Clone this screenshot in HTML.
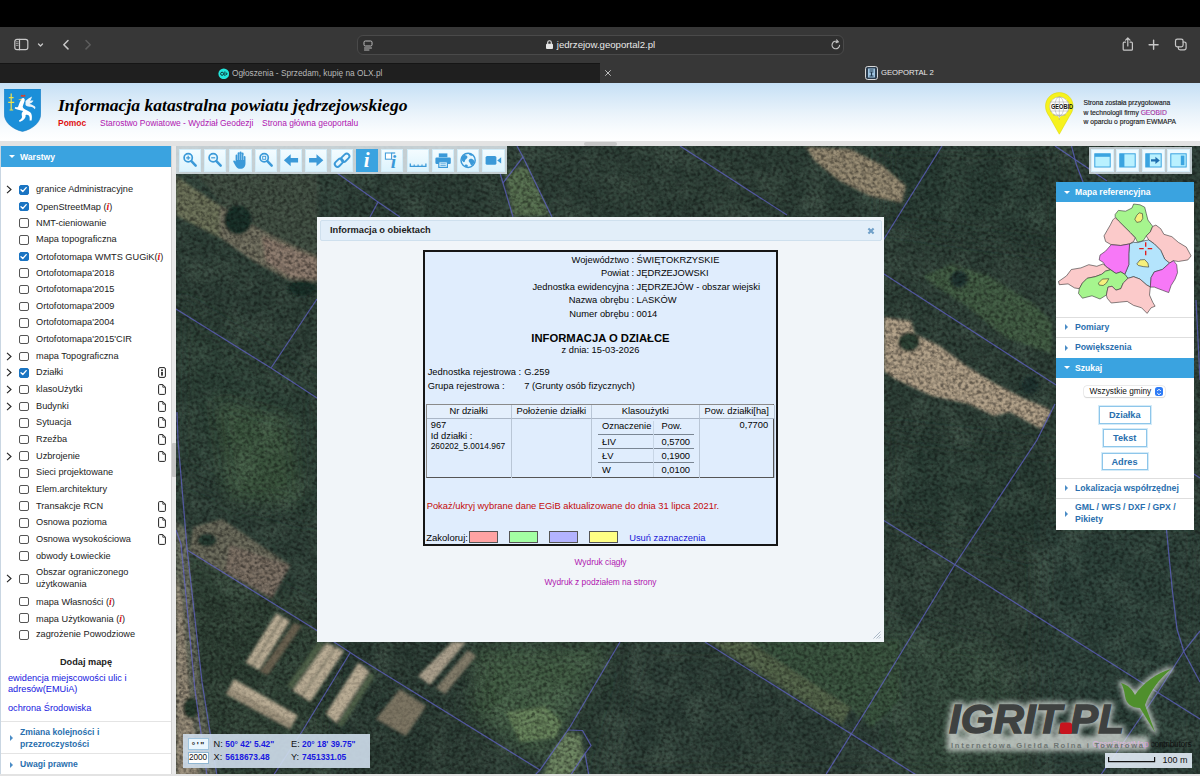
<!DOCTYPE html>
<html lang="pl">
<head>
<meta charset="utf-8">
<title>GEOPORTAL 2</title>
<style>
*{box-sizing:border-box;margin:0;padding:0}
html,body{width:1200px;height:776px;overflow:hidden;background:#000;font-family:"Liberation Sans",sans-serif;}
.abs{position:absolute}
#chrome{position:absolute;left:0;top:0;width:1200px;height:83px;background:#000}
#tb{position:absolute;left:0;top:27px;width:1200px;height:36px;background:#373737}
#tabs{position:absolute;left:0;top:63px;width:1200px;height:20px;background:#373737}
#tabinact{position:absolute;left:0;top:0;width:600px;height:20px;background:#1f1f1f;border-top:1px solid #151515}
#url{position:absolute;left:357px;top:8px;width:487px;height:19.5px;border-radius:6px;background:#303030;border:1px solid #4a4a4a}
#urltxt{position:absolute;left:0;width:100%;top:3px;text-align:center;color:#e8e8e8;font-size:9.650px;letter-spacing:0}
.tabtxt{position:absolute;top:5px;color:#b8b8b8;font-size:8.5px;white-space:nowrap}
#page{position:absolute;left:0;top:83px;width:1200px;height:693px;background:#e3e3e3;overflow:hidden}
#hdr{position:absolute;left:0;top:0;width:1200px;height:58px;background:linear-gradient(#c5e0f5 0%,#d9eaf8 28%,#ebf4fb 55%,#f9fcfe 82%,#fff 100%)}
.gt{position:absolute;margin-top:.8px;left:1083.500px;font-size:6.720px;color:#222;white-space:nowrap;-webkit-text-stroke:.15px #222}
#title{position:absolute;left:58px;top:12px;font-family:"Liberation Serif",serif;font-weight:bold;font-style:italic;font-size:17.6px;color:#000;white-space:nowrap}
.hl{position:absolute;top:34.7px;font-size:8.45px;white-space:nowrap}
#left{position:absolute;left:0;top:63px;width:170.500px;height:628.200px;background:#fff;overflow:hidden;border-left:1px solid #c9d6e2}
.acc{position:absolute;left:0;width:170px;height:21px;background:#3aa3e0;color:#fff;font-weight:bold;font-size:8.6px}
.acct{position:absolute;left:19px;top:5.5px;white-space:nowrap}
.tri{position:absolute;width:0;height:0}
.tri.d{left:8px;top:9px;border-left:3px solid transparent;border-right:3px solid transparent;border-top:3.5px solid #fff}
.tri.r{left:9px;border-top:2.7px solid transparent;border-bottom:2.7px solid transparent;border-left:3px solid #4a8cc6}
.row{position:absolute;left:0;margin-top:.6px;width:170px;height:16px;font-size:9.2px;color:#222}
.arw{position:absolute;left:5.200px;top:3.5px}
.cb{position:absolute;left:18px;top:3.3px;width:9.5px;height:9.5px;border:1px solid #555;border-radius:2px;background:#fff}
.cb.on{background:#1a74c2;border-color:#1a74c2}
.cb svg{position:absolute;left:-.8px;top:-.8px}
.lt{position:absolute;left:35px;top:2.5px;white-space:nowrap;line-height:11px}
.lt.two{top:-3.5px;line-height:11.6px}
.ri{color:#e01010;font-family:"Liberation Serif",serif;font-weight:bold;font-style:italic;font-size:10px}
.doc{position:absolute;left:157px;top:2.5px}
.addm{position:absolute;left:0;width:170px;text-align:center;font-weight:bold;font-size:9.2px;color:#222}
.blk{position:absolute;left:7px;font-size:9.2px;line-height:11px;color:#1515e0;white-space:nowrap}
.acc2{position:absolute;left:0;width:170px;background:#fff;border-top:1px solid #e4e4e4;color:#2a6fae;font-weight:bold;font-size:8.6px}
.acc2 .tri.r{top:50%;margin-top:-3px;border-top-width:3px;border-bottom-width:3px;border-left-width:3.500px}
.acct2{position:absolute;left:19px;line-height:11.5px;white-space:nowrap}
#hthumb{position:absolute;left:584px;top:59px;width:33px;height:3.500px;background:#c6c6c6;border-radius:2px}
#vscroll{position:absolute;left:170.500px;top:63px;width:5.500px;height:628.200px;background:#e9e9e9;border-left:1px solid #d2d2d2}
#vthumb{position:absolute;left:0;top:297px;width:5px;height:34px;background:#c3c3c3;border-radius:1px}
#map{position:absolute;left:176px;top:63px;width:1024px;height:628.200px;background:#2d4138;overflow:hidden}
#mapsvg{position:absolute;left:0;top:0}
#mtb{position:absolute;left:0;top:0;width:331.300px;height:28px;background:rgba(222,232,238,.86)}
.tbtn{position:absolute;top:2.900px;width:22.200px;height:22.700px;background:linear-gradient(#f4fcff,#dcf3fd);border:1px solid #d2ecf8}
.tbtn svg{position:absolute;left:-1px;top:-1px}
.tbtn.act{background:#3aa3e0;border-color:#3aa3e0}
#rtb{position:absolute;left:912.500px;top:.5px;width:103.300px;height:27.700px;background:rgba(218,228,234,.84)}
.rbtn{position:absolute;top:2.700px;width:23px;height:22.500px;background:#eefaff;border:1px solid #d6edf8}
.rbtn svg{position:absolute;left:-1px;top:-1px}
#dlg{position:absolute;left:141px;top:70.500px;width:567px;height:425px;background:#f1f5f9;font-size:9.200px;color:#111}
#dlgt{position:absolute;left:2.500px;top:3px;width:562px;height:21px;background:#e2eef9;border:1px solid #cfe0ee;border-radius:2px}
#dlgtt{position:absolute;left:9.500px;top:4.500px;font-weight:bold;font-size:9.250px;color:#222;white-space:nowrap}
#ibox{position:absolute;left:106.200px;top:33.500px;width:354.500px;height:296px;background:#e0edfd;border:2px solid #161616;font-size:9.350px;color:#050505}
.kv{position:absolute;left:0;width:100%;height:12px;white-space:nowrap}
.k{position:absolute;right:141.500px;top:0}
.v{position:absolute;left:211.300px;top:0}
#ihead{position:absolute;left:0;width:100%;top:79.500px;text-align:center;font-weight:bold;font-size:11.250px;white-space:nowrap}
#idate{position:absolute;left:0;width:100%;top:92.500px;text-align:center;white-space:nowrap}
.jr{position:absolute;left:2.500px;white-space:nowrap;width:300px}
#tbl{position:absolute;left:0.500px;top:152px;width:348.500px;height:74px;border:1px solid #555;border-top-color:#8a8a8a;border-left-color:#8a8a8a}
.th{position:absolute;top:0;height:13.500px;text-align:center;border-right:1px solid #b9c6d6;border-bottom:1px solid #aab6c6;line-height:13px;white-space:nowrap;background:#e4effc}
.td{position:absolute;top:13.500px;height:59px;border-right:1px solid #b9c6d6}
.it{position:absolute;left:6px;width:96.500px;height:14px;white-space:nowrap}
.it.ln{border-top:1px solid #7a8694}
.c1{position:absolute;left:4px;top:2px}
.c2{position:absolute;left:63.500px;top:2px}
#redt{position:absolute;left:1.500px;top:248.500px;color:#c40a0a;white-space:nowrap}
#zak{position:absolute;left:1px;top:280px;font-size:9.500px;white-space:nowrap}
.sw{position:absolute;top:279px;width:29px;height:12px;border:1px solid #555}
#usun{position:absolute;left:204px;top:280.500px;color:#1a1ad8;white-space:nowrap}
.wyd{position:absolute;left:0;width:100%;text-align:center;color:#b016b0;font-size:8.400px;white-space:nowrap}
#rp{position:absolute;left:879.500px;top:36px;width:138.500px;height:348px;background:#fff}
.rh{position:absolute;left:0;width:138.500px;height:20.200px;background:#3aa3e0;color:#fff;font-weight:bold;font-size:8.600px}
.rht{position:absolute;left:19.500px;top:5px;white-space:nowrap}
.rr{position:absolute;left:0;width:138.500px;border-top:1px solid #dedede;color:#2a6fae;font-weight:bold;font-size:8.700px}
.rr .tri.r{top:50%;margin-top:-3.200px;left:9.500px;border-top-width:3px;border-bottom-width:3px;border-left-width:3.500px}
.rrt{position:absolute;left:19.500px;top:4px;white-space:nowrap}
#sel{position:absolute;left:28.500px;top:204px;width:80.500px;height:11px;border-radius:3px;background:#fff;box-shadow:0 0 0 .5px #dcdcdc,0 .5px 1px rgba(0,0,0,.18);font-size:8.300px;line-height:11px;padding-left:5.500px;color:#111;white-space:nowrap}
#selb{position:absolute;right:1.200px;top:1px;width:8px;height:9px;border-radius:2.500px;background:#2f7cf6}
#selb svg{position:absolute;left:1px;top:.5px}
.sb{position:absolute;border:1px solid #8ec6ea;box-shadow:0 0 0 1px #d4ebf8;background:#fff;color:#2a6fae;font-weight:bold;font-size:9.200px;text-align:center;line-height:16px}
#cbox{position:absolute;left:7px;top:587.500px;width:186.500px;height:34.500px;background:rgba(207,222,236,.9);font-size:9.200px}
.cbtn{position:absolute;left:4.500px;width:21px;height:12px;border:1px solid #9fc4de;background:#eaf6fd;text-align:center;line-height:10.500px;font-size:9px;color:#111}
.cl{position:absolute;color:#111;white-space:nowrap}
.cv{position:absolute;color:#1818e0;font-weight:bold;font-size:8.400px;white-space:nowrap;margin-top:.3px}
#attr{position:absolute;right:8.500px;top:592.500px;font-size:8.300px;color:#111;white-space:nowrap;letter-spacing:-.2px}
#scl{position:absolute;left:929px;top:606.500px;width:87px;height:15px;background:rgba(222,232,242,.92);font-size:9px;color:#111}

</style>
</head>
<body>
<div id="chrome">
  <div id="tb">
    <svg class="abs" style="left:12px;top:9px" width="90" height="18" viewBox="0 0 90 18" fill="none" stroke="#c8c8c8" stroke-width="1.2" stroke-linecap="round" stroke-linejoin="round">
      <rect x="2.800" y="3.300" width="13" height="10.400" rx="2.200"/><path d="M7.500 3.300v10.400"/><path d="M4.300 5.800h1.800M4.300 7.600h1.800M4.300 9.400h1.800" stroke-width=".7"/>
      <path d="M26.5 8l2 2 2-2" stroke-width="1.3"/>
      <path d="M56 4.5l-4.2 4.2 4.2 4.2" stroke-width="1.5"/>
      <path d="M74 4.5l4.2 4.2-4.2 4.2" stroke="#5c5c5c" stroke-width="1.5"/>
    </svg>
    <div id="url">
      <svg class="abs" style="left:5px;top:4px" width="10" height="11" viewBox="0 0 10 11" fill="none" stroke="#bdbdbd" stroke-width="1"><rect x="1" y="1" width="8" height="5" rx="1.3"/><path d="M1.5 8h7M1.5 10h4.5" stroke-linecap="round"/></svg>
      <div id="urltxt"><svg width="7" height="9" viewBox="0 0 7 9" style="vertical-align:-0.5px;margin-right:4px"><rect x="0" y="3.8" width="7" height="5.2" rx="1" fill="#e6e6e6"/><path d="M1.7 4V2.6a1.8 1.8 0 0 1 3.6 0V4" fill="none" stroke="#e6e6e6" stroke-width="1.1"/></svg>jedrzejow.geoportal2.pl</div>
      <svg class="abs" style="left:472px;top:3px" width="12" height="12" viewBox="0 0 12 12" fill="none" stroke="#c4c4c4" stroke-width="1.1" stroke-linecap="round"><path d="M9.6 6.2a3.8 3.8 0 1 1-1.6-3.3"/><path d="M6.6 0.8l1.7 2-2.3 1" stroke-linejoin="round"/></svg>
    </div>
    <svg class="abs" style="left:1118px;top:8px" width="76" height="20" viewBox="0 0 76 20" fill="none" stroke="#c8c8c8" stroke-width="1.2" stroke-linecap="round" stroke-linejoin="round">
      <path d="M7.5 7.2H6.2a1 1 0 0 0-1 1v6a1 1 0 0 0 1 1h7.2a1 1 0 0 0 1-1v-6a1 1 0 0 0-1-1h-1.3"/><path d="M9.8 11V3.2M7.6 5.2l2.2-2.2 2.2 2.2"/>
      <path d="M35.6 5.2v9M31.1 9.7h9" stroke-width="1.4"/>
      <rect x="57.5" y="4.2" width="7.6" height="7.6" rx="1.8"/><path d="M60.3 11.8v1.2a1.8 1.8 0 0 0 1.8 1.8h4.2a1.8 1.8 0 0 0 1.8-1.8V8.8a1.8 1.8 0 0 0-1.8-1.8h-1.2"/>
    </svg>
  </div>
  <div id="tabs">
    <div id="tabinact"></div>
    <svg class="abs" style="left:217.500px;top:4.500px" width="11.500" height="11.500" viewBox="0 0 12 12"><circle cx="6" cy="6" r="5.6" fill="#23e5db"/><circle cx="4.3" cy="6" r="1.6" fill="none" stroke="#0b2f33" stroke-width="1"/><path d="M7.2 3.6v4.8M8.3 5l1.4 1-1.4 1" stroke="#0b2f33" stroke-width="1" fill="none"/></svg>
    <div class="tabtxt" style="left:232px;font-size:8.3px">Ogłoszenia - Sprzedam, kupię na OLX.pl</div>
    <svg class="abs" style="left:604px;top:6px" width="8" height="8" viewBox="0 0 8 8" stroke="#bdbdbd" stroke-width="1" stroke-linecap="round"><path d="M1.5 1.5l5 5M6.5 1.5l-5 5"/></svg>
    <svg class="abs" style="left:865px;top:3px" width="13" height="14" viewBox="0 0 13 14"><rect x=".5" y=".5" width="12" height="13" rx="2.2" fill="#2c3e50" stroke="#d8d8d8" stroke-width="1"/><rect x="3" y="2.5" width="7" height="9" fill="#9fc4e0"/><path d="M4.5 4h4M4.5 6h4M6.5 6v4M4.5 10h4" stroke="#20384d" stroke-width="1.2"/></svg>
    <div class="tabtxt" style="left:881px;color:#e9e9e9;font-size:7.7px;letter-spacing:-.05px">GEOPORTAL 2</div>
  </div>
</div>
<div id="page">
  <div id="hdr">
    <svg class="abs" style="left:4px;top:6px" width="37" height="43" viewBox="4 89 37 43">
      <path d="M4.200 89h36.600v24.500c0 9-8 15.500-18.300 18-10.300-2.500-18.300-9-18.300-18z" fill="#1b8fd9" stroke="#1a79bd" stroke-width=".5"/>
      <path d="M11.200 93.400v16.600M8.800 97.600h4.800M8.200 102.300h6M9.600 110h3.600" stroke="#f2e24a" stroke-width="1.200" fill="none"/>
      <path d="M21.500 98.500c1.500-1 3-.5 3.200 1 .300 2-1.500 4.500-2 7 .0 1.500 1.500 2.500 3.500 3.500 2 1 3.800 1.500 5 3.500 1 2 .8 5 .4 7h-2c.2-2 .2-4-.8-5-1-.8-2.300-.8-3.300-.3.500 1.500-.5 3-2 4.500-1 1-2.500 1.800-3.800 2.200l-.8-1.300c1.300-.700 2.500-1.800 3-3 .4-1.200-.4-2.300-.2-3.800.2-1.200 1-2 1.500-2.700-2-.5-4-.8-6-1.500l-2.500-1 .5-1.700c1.500.6 2.500.5 3-.5.800-1.800 1.200-4 2.500-6 .5-.8.300-1.500 1-2z" fill="#fff"/>
      <path d="M25.500 101c2-1.500 4-3.500 6.500-4.500-.5 2-1 3-2 4.500 1.500-.5 2.500-.5 3.500-.3-1 1.500-2.500 2.500-4 3.200 2 .3 4 1.300 5.500 2.600.6 1 .5 2-.3 2.700-1-1.800-2.700-2.700-4.700-2.500-2 .1-3.500-.5-4.500-1.700z" fill="#eaf4fb"/>
      <path d="M20.500 96.200c.5-1.500 2-1.800 2.800-.8.800-1 2.200-.6 2.200.8-1.500.8-3.500.8-5 0z" fill="#d8412a"/>
      <path d="M18.200 99.500l3-.8.2 1.800z" fill="#f2c84a"/>
    </svg>
    <svg class="abs" style="left:1044px;top:8px" width="32" height="45" viewBox="1044 91 32 45">
      <path d="M1059.300 92.600c7.700 0 13.800 6 13.800 13.600 0 4-1.600 7-3.800 10.200l-10 17.800-10-17.800c-2.200-3.200-3.800-6.200-3.800-10.200 0-7.600 6.100-13.600 13.800-13.600z" fill="#f6f21e" stroke="#d8d400" stroke-width=".5"/>
      <circle cx="1059.300" cy="106.500" r="9.800" fill="#fff"/>
      <path d="M1059.300 118.500l-5-9h10z" fill="#fff"/>
      <g fill="none" stroke="#8a8a8a" stroke-width=".4"><circle cx="1059.300" cy="106.500" r="9.600"/><ellipse cx="1059.300" cy="106.500" rx="4.500" ry="9.600"/><path d="M1059.300 96.900v23M1050 102h18.600M1050 111h18.600M1053 115h12.500"/></g>
      <text x="1051" y="109.300" font-family="Liberation Sans,sans-serif" font-weight="bold" font-size="6.300" fill="#111" textLength="22" lengthAdjust="spacingAndGlyphs">GEOBID</text>
    </svg>
    <div class="gt" style="top:15px">Strona została przygotowana</div>
    <div class="gt" style="top:24.800px">w technologii firmy <span style="color:#e040e0">GEOBID</span></div>
    <div class="gt" style="top:34.500px">w oparciu o program EWMAPA</div>
    <div id="title">Informacja katastralna powiatu jędrzejowskiego</div>
    <div class="hl" style="left:58px;color:#e01010;font-weight:bold">Pomoc</div>
    <div class="hl" style="left:100px;color:#b016b0">Starostwo Powiatowe - Wydział Geodezji</div>
    <div class="hl" style="left:262px;color:#b016b0">Strona główna geoportalu</div>
  </div>
  <div id="hthumb"></div>
  <div id="left">
    <div class="acc" style="top:0"><span class="tri d"></span><span class="acct">Warstwy</span></div>
    <div class="row" style="top:35.2px"><svg class="arw" width="6" height="9" viewBox="0 0 6 9"><path d="M1 .8l4 3.7-4 3.7" fill="none" stroke="#222" stroke-width="1.1"/></svg><span class="cb on"><svg width="9" height="9" viewBox="0 0 9 9"><path d="M2 4.7l1.8 1.8L7.2 2.6" fill="none" stroke="#fff" stroke-width="1.3" stroke-linecap="round" stroke-linejoin="round"/></svg></span><span class="lt">granice Administracyjne</span></div>
    <div class="row" style="top:51.9px"><span class="cb on"><svg width="9" height="9" viewBox="0 0 9 9"><path d="M2 4.7l1.8 1.8L7.2 2.6" fill="none" stroke="#fff" stroke-width="1.3" stroke-linecap="round" stroke-linejoin="round"/></svg></span><span class="lt">OpenStreetMap (<i class="ri">i</i>)</span></div>
    <div class="row" style="top:68.5px"><span class="cb"></span><span class="lt">NMT-cieniowanie</span></div>
    <div class="row" style="top:85.2px"><span class="cb"></span><span class="lt">Mapa topograficzna</span></div>
    <div class="row" style="top:101.8px"><span class="cb on"><svg width="9" height="9" viewBox="0 0 9 9"><path d="M2 4.7l1.8 1.8L7.2 2.6" fill="none" stroke="#fff" stroke-width="1.3" stroke-linecap="round" stroke-linejoin="round"/></svg></span><span class="lt">Ortofotomapa WMTS GUGiK(<i class="ri">i</i>)</span></div>
    <div class="row" style="top:118.5px"><span class="cb"></span><span class="lt">Ortofotomapa'2018</span></div>
    <div class="row" style="top:135.1px"><span class="cb"></span><span class="lt">Ortofotomapa'2015</span></div>
    <div class="row" style="top:151.8px"><span class="cb"></span><span class="lt">Ortofotomapa'2009</span></div>
    <div class="row" style="top:168.4px"><span class="cb"></span><span class="lt">Ortofotomapa'2004</span></div>
    <div class="row" style="top:185.1px"><span class="cb"></span><span class="lt">Ortofotomapa'2015'CIR</span></div>
    <div class="row" style="top:201.7px"><svg class="arw" width="6" height="9" viewBox="0 0 6 9"><path d="M1 .8l4 3.7-4 3.7" fill="none" stroke="#222" stroke-width="1.1"/></svg><span class="cb"></span><span class="lt">mapa Topograficzna</span></div>
    <div class="row" style="top:218.4px"><svg class="arw" width="6" height="9" viewBox="0 0 6 9"><path d="M1 .8l4 3.7-4 3.7" fill="none" stroke="#222" stroke-width="1.1"/></svg><span class="cb on"><svg width="9" height="9" viewBox="0 0 9 9"><path d="M2 4.7l1.8 1.8L7.2 2.6" fill="none" stroke="#fff" stroke-width="1.3" stroke-linecap="round" stroke-linejoin="round"/></svg></span><span class="lt">Działki</span><svg class="doc" width="8" height="11" viewBox="0 0 8 11"><rect x=".6" y=".6" width="6.8" height="9.8" rx="1.4" fill="#fff" stroke="#222" stroke-width="1"/><circle cx="4" cy="3.2" r=".9" fill="#111"/><rect x="3.2" y="4.8" width="1.6" height="3.8" fill="#111"/></svg></div>
    <div class="row" style="top:235.0px"><svg class="arw" width="6" height="9" viewBox="0 0 6 9"><path d="M1 .8l4 3.7-4 3.7" fill="none" stroke="#222" stroke-width="1.1"/></svg><span class="cb"></span><span class="lt">klasoUżytki</span><svg class="doc" width="8" height="11" viewBox="0 0 8 11"><path d="M1.6.6h3.2L7.4 3.2v6.2a1 1 0 0 1-1 1H1.6a1 1 0 0 1-1-1V1.6a1 1 0 0 1 1-1z" fill="#fff" stroke="#222" stroke-width="1"/><path d="M4.8.6v2.6h2.6" fill="none" stroke="#222" stroke-width=".8"/></svg></div>
    <div class="row" style="top:251.7px"><svg class="arw" width="6" height="9" viewBox="0 0 6 9"><path d="M1 .8l4 3.7-4 3.7" fill="none" stroke="#222" stroke-width="1.1"/></svg><span class="cb"></span><span class="lt">Budynki</span><svg class="doc" width="8" height="11" viewBox="0 0 8 11"><path d="M1.6.6h3.2L7.4 3.2v6.2a1 1 0 0 1-1 1H1.6a1 1 0 0 1-1-1V1.6a1 1 0 0 1 1-1z" fill="#fff" stroke="#222" stroke-width="1"/><path d="M4.8.6v2.6h2.6" fill="none" stroke="#222" stroke-width=".8"/></svg></div>
    <div class="row" style="top:268.3px"><span class="cb"></span><span class="lt">Sytuacja</span><svg class="doc" width="8" height="11" viewBox="0 0 8 11"><path d="M1.6.6h3.2L7.4 3.2v6.2a1 1 0 0 1-1 1H1.6a1 1 0 0 1-1-1V1.6a1 1 0 0 1 1-1z" fill="#fff" stroke="#222" stroke-width="1"/><path d="M4.8.6v2.6h2.6" fill="none" stroke="#222" stroke-width=".8"/></svg></div>
    <div class="row" style="top:285.0px"><span class="cb"></span><span class="lt">Rzeźba</span><svg class="doc" width="8" height="11" viewBox="0 0 8 11"><path d="M1.6.6h3.2L7.4 3.2v6.2a1 1 0 0 1-1 1H1.6a1 1 0 0 1-1-1V1.6a1 1 0 0 1 1-1z" fill="#fff" stroke="#222" stroke-width="1"/><path d="M4.8.6v2.6h2.6" fill="none" stroke="#222" stroke-width=".8"/></svg></div>
    <div class="row" style="top:301.6px"><svg class="arw" width="6" height="9" viewBox="0 0 6 9"><path d="M1 .8l4 3.7-4 3.7" fill="none" stroke="#222" stroke-width="1.1"/></svg><span class="cb"></span><span class="lt">Uzbrojenie</span><svg class="doc" width="8" height="11" viewBox="0 0 8 11"><path d="M1.6.6h3.2L7.4 3.2v6.2a1 1 0 0 1-1 1H1.6a1 1 0 0 1-1-1V1.6a1 1 0 0 1 1-1z" fill="#fff" stroke="#222" stroke-width="1"/><path d="M4.8.6v2.6h2.6" fill="none" stroke="#222" stroke-width=".8"/></svg></div>
    <div class="row" style="top:318.3px"><span class="cb"></span><span class="lt">Sieci projektowane</span></div>
    <div class="row" style="top:334.9px"><span class="cb"></span><span class="lt">Elem.architektury</span></div>
    <div class="row" style="top:351.6px"><span class="cb"></span><span class="lt">Transakcje RCN</span><svg class="doc" width="8" height="11" viewBox="0 0 8 11"><path d="M1.6.6h3.2L7.4 3.2v6.2a1 1 0 0 1-1 1H1.6a1 1 0 0 1-1-1V1.6a1 1 0 0 1 1-1z" fill="#fff" stroke="#222" stroke-width="1"/><path d="M4.8.6v2.6h2.6" fill="none" stroke="#222" stroke-width=".8"/></svg></div>
    <div class="row" style="top:368.2px"><span class="cb"></span><span class="lt">Osnowa pozioma</span><svg class="doc" width="8" height="11" viewBox="0 0 8 11"><path d="M1.6.6h3.2L7.4 3.2v6.2a1 1 0 0 1-1 1H1.6a1 1 0 0 1-1-1V1.6a1 1 0 0 1 1-1z" fill="#fff" stroke="#222" stroke-width="1"/><path d="M4.8.6v2.6h2.6" fill="none" stroke="#222" stroke-width=".8"/></svg></div>
    <div class="row" style="top:384.9px"><span class="cb"></span><span class="lt">Osnowa wysokościowa</span><svg class="doc" width="8" height="11" viewBox="0 0 8 11"><path d="M1.6.6h3.2L7.4 3.2v6.2a1 1 0 0 1-1 1H1.6a1 1 0 0 1-1-1V1.6a1 1 0 0 1 1-1z" fill="#fff" stroke="#222" stroke-width="1"/><path d="M4.8.6v2.6h2.6" fill="none" stroke="#222" stroke-width=".8"/></svg></div>
    <div class="row" style="top:401.5px"><span class="cb"></span><span class="lt">obwody Łowieckie</span></div>
    <div class="row" style="top:424.2px"><svg class="arw" width="6" height="9" viewBox="0 0 6 9"><path d="M1 .8l4 3.7-4 3.7" fill="none" stroke="#222" stroke-width="1.1"/></svg><span class="cb"></span><span class="lt two">Obszar ograniczonego<br>użytkowania</span></div>
    <div class="row" style="top:447.0px"><span class="cb"></span><span class="lt">mapa Własności (<i class="ri">i</i>)</span></div>
    <div class="row" style="top:463.6px"><span class="cb"></span><span class="lt">mapa Użytkowania (<i class="ri">i</i>)</span></div>
    <div class="row" style="top:480.3px"><span class="cb"></span><span class="lt">zagrożenie Powodziowe</span></div>
    <div class="addm" style="top:511px">Dodaj mapę</div>
    <div class="blk" style="top:527px">ewidencja miejscowości ulic i<br>adresów(EMUiA)</div>
    <div class="blk" style="top:557px">ochrona Środowiska</div>
    <div class="acc2" style="top:575px;height:33px"><span class="tri r"></span><span class="acct2" style="top:5px">Zmiana kolejności i<br>przezroczystości</span></div>
    <div class="acc2" style="top:607px;height:23px"><span class="tri r"></span><span class="acct2" style="top:5px">Uwagi prawne</span></div>
  </div>
  <div id="vscroll"><div id="vthumb"></div></div>
  <div id="map">
<svg id="mapsvg" width="1024" height="630" viewBox="176 146 1024 630">
<defs>
<filter id="b6" x="-20%" y="-20%" width="140%" height="140%"><feGaussianBlur stdDeviation="9"/></filter>
<filter id="b3" x="-20%" y="-20%" width="140%" height="140%"><feGaussianBlur stdDeviation="1.500"/></filter>
<filter id="noise" x="0" y="0" width="100%" height="100%"><feTurbulence type="fractalNoise" baseFrequency="0.3 0.34" numOctaves="2" seed="7"/><feColorMatrix type="matrix" values="0 0 0 0 0  0 0 0 0 0  0 0 0 0 0  1.7 1.7 1.7 0 -2.2"/><feGaussianBlur stdDeviation="0.75"/></filter>
<filter id="noise2" x="0" y="0" width="100%" height="100%"><feTurbulence type="fractalNoise" baseFrequency="0.31 0.27" numOctaves="2" seed="23"/><feColorMatrix type="matrix" values="0 0 0 0 1  0 0 0 0 1  0 0 0 0 1  1 1 1 0 -1.3"/><feGaussianBlur stdDeviation="0.9"/></filter>
<filter id="noise3" x="0" y="0" width="100%" height="100%"><feTurbulence type="fractalNoise" baseFrequency="0.035" numOctaves="2" seed="5"/><feColorMatrix type="matrix" values="0 0 0 0 0.55  0 0 0 0 0.78  0 0 0 0 0.55  1.2 1.2 1.2 0 -1.6"/></filter>
</defs>
<rect x="176" y="146" width="1024" height="630" fill="#2b3e35"/>
<g filter="url(#b6)">
  <polygon points="176,300 317,390 317,520 250,500 176,470" fill="#2b3f35"/>
  <polygon points="215,400 290,420 300,500 230,500" fill="#38523b"/>
  <polygon points="884,146 1060,146 1060,250 884,225" fill="#273a32"/>
  <polygon points="884,430 1060,450 1060,560 884,520" fill="#273a32"/>
  <polygon points="475,646 612,646 566,726 540,760 470,715" fill="#405b43"/>
  <polygon points="870,620 1000,650 1030,776 870,776" fill="#32493a"/>
  <polygon points="640,642 870,642 900,776 600,776" fill="#293c34"/>
  <polygon points="1040,520 1200,520 1200,776 1040,776" fill="#2c3f38"/>
  <polygon points="176,540 330,620 330,776 176,776" fill="#2f4336"/>
</g>
<rect x="176" y="146" width="1024" height="630" filter="url(#noise3)" opacity=".12"/>
<g filter="url(#b3)">
  <polygon points="196,174 318,174 318,256 292,245 257,228 226,209" fill="#404f42"/>
  <polygon points="176,176 201,193 226,209 257,228 292,245 318,256 318,282 288,280 253,261 215,234 176,215.5" fill="#72705e"/>
  <polygon points="176,176 201,193 220,206 220,238 176,215.5" fill="#6c7258"/>
  <polygon points="262,236 318,259 318,280 290,277 266,262" fill="#8c7a6c"/>
  <ellipse cx="238" cy="220" rx="14" ry="15" fill="#172f28"/>
  <ellipse cx="302" cy="288" rx="14" ry="8" fill="#172f28"/>
  <polygon points="193,527 222,519 290,565 272,599 212,566 189,551" fill="#6b6a5a"/>
  <polygon points="230,545 290,566 272,598 225,572" fill="#7c6f64"/>
  <ellipse cx="207" cy="540" rx="10" ry="7" fill="#23392f"/>
  <polygon points="176,520 186,530 200,680 216,776 198,776 186,690 176,600" fill="#6b7060"/>
  <polygon points="176,575 182,600 189,690 199,776 176,776" fill="#a29681"/>
  <ellipse cx="191" cy="708" rx="8" ry="11" fill="#273e2d"/>
  <polygon points="506,712 545,706 562,722 556,738 520,742" fill="#66835a"/>
  <polygon points="567,732 581,735 584,756 572,776 543,776 554,748" fill="#6c8560"/>
  <polygon points="748,640 900,640 900,700 872,728 850,708" fill="#39523e"/>
  <polygon points="708,641 748,641 851,708 842,725" fill="#52654a"/>
  <polygon points="505,172 527,166 550,216 513,216" fill="#56704f"/>
  <polygon points="806,147 850,149 882,165 906,186 902,203 870,196 838,180 814,160" fill="#978b72"/>
  <polygon points="923,276 952,264 990,276 1035,305 1052,321 1052,354 1006,338 965,305 932,284" fill="#405b43"/>
  <polygon points="884,317 911,321 915,334 940,346 965,365 994,383 1023,398 1047,408 1051,412 1041,429 1010,412 994,416 969,404 932,396 895,379 884,371" fill="#b2a188"/>
  <ellipse cx="909" cy="342" rx="11" ry="10" fill="#2a4032"/>
  <ellipse cx="959" cy="279" rx="9" ry="9" fill="#1b332d"/>
  <ellipse cx="1030" cy="385" rx="9" ry="9" fill="#1b332d"/>
</g>
<rect x="-200" y="-300" width="1700" height="1500" transform="rotate(21 688 461)" filter="url(#noise)" opacity=".46"/>
<rect x="-200" y="-300" width="1700" height="1500" transform="rotate(-33 688 461)" filter="url(#noise2)" opacity=".10"/>
<g filter="url(#b3)" opacity=".93">
  <polygon points="245.600,662.500 259.100,670.200 290,621 276.500,613.200" fill="#c4b59c"/>
  <path d="M252 666.500L283 617" stroke="#434a3d" stroke-width="1.200"/>
  <polygon points="260,672 267.800,675 301.600,625.700 293.900,622.900" fill="#706552"/>
  <polygon points="287.100,685.700 292,689.500 324.800,644.100 318,642.200" fill="#52654c"/>
  <polygon points="292.900,690.500 310.300,702 344.100,650.900 326.700,643.100" fill="#c4b59c"/>
  <path d="M301.500 696.500L335.500 647" stroke="#434a3d" stroke-width="1.200"/>
  <polygon points="325.800,713.700 336.400,723.300 369.200,671.200 358.600,662.500" fill="#c4b59c"/>
  <polygon points="337.500,724 342,727 375,676 370,672" fill="#52654c"/>
  <polygon points="418,676 452,642 466,642 430,685" fill="#b4a793"/>
  <polygon points="436,688 468,650 476,656 445,694" fill="#89816e"/>
  <polygon points="400,689 426,706 406,736 376,719" fill="#827966"/>
  <polygon points="234,678.900 226.200,694.300 290,729.100 297.700,715.600" fill="#c4b59c"/>
  <polygon points="230,687 226.200,694.300 290,729.100 293.500,722" fill="#a49781"/>
</g>
<rect x="176" y="600" width="320" height="176" filter="url(#noise)" opacity=".14"/>
<g fill="none" stroke="#6a69e0" stroke-width="1.250" opacity=".62">
  <path d="M176 309L271 368L317 398L500 512"/>
  <path d="M271 368L317 299"/>
  <path d="M177 412L178 440L187 548L202 682L217 776"/>
  <path d="M176 530L181 544L195 690L207 776"/>
  <path d="M187 550L313 628L357 657L540 770"/>
  <path d="M350 653L303 730L273 776"/>
  <path d="M620 642L570 727L540 770L534 776"/>
  <path d="M567.500 730L582.500 730.500L591 745.500L585 753.500L589 776M585 753.500L570 776"/>
  <path d="M705 642L918 776"/>
  <path d="M1055 404L1037 440L954 566L870 704L825 776"/>
  <path d="M780 456L883 520L957 566L1133 677L1200 719"/>
  <path d="M1166.500 530L1172.300 590L1177 629L1184 652L1200 682"/>
  <path d="M1200 631L1184 651L1158 692L1112 759L1100 776"/>
  <path d="M942 146L884 239L860 280"/>
  <path d="M860 259L884 274L1053 383L1200 478"/>
  <path d="M680 146L787 215"/>
  <path d="M517 146L523 157L552 217"/>
  <path d="M523 157L503 183"/>
  <path d="M500 173L513 217"/>
  <path d="M337 173L378 202L400 217"/>
  <path d="M378 202L370 217"/>
  <path d="M1055 146L1087 167.500L1107 181"/>
  <path d="M1071.500 146L1076.500 165L1083 182"/>
  <path d="M1196 300L1200 380"/>
</g>
</svg>
<div id="mtb"><div class="tbtn" style="left:2.8px"><svg width="22.2" height="22.7" viewBox="0 0 22.2 22.7"><circle cx="9.2" cy="8.8" r="4.1" fill="#e6f7fe" stroke="#3b99d8" stroke-width="1.7"/><path d="M12.4 12.1l4.300 4.500" stroke="#3b99d8" stroke-width="2.500" stroke-linecap="round"/><path d="M7.200 8.800h4M9.200 6.800v4" stroke="#3b99d8" stroke-width="1.200"/></svg></div><div class="tbtn" style="left:28.1px"><svg width="22.2" height="22.7" viewBox="0 0 22.2 22.7"><circle cx="9.2" cy="8.8" r="4.1" fill="#e6f7fe" stroke="#3b99d8" stroke-width="1.7"/><path d="M12.4 12.1l4.300 4.500" stroke="#3b99d8" stroke-width="2.500" stroke-linecap="round"/><path d="M7.200 8.800h4" stroke="#3b99d8" stroke-width="1.200"/></svg></div><div class="tbtn" style="left:53.4px"><svg width="22.2" height="22.7" viewBox="0 0 22.2 22.7"><path d="M6.600 12.400V6.600a1 1 0 0 1 2 0V4.200a1 1 0 0 1 2 0V3.600a1 1 0 0 1 2 0v.800a1 1 0 0 1 2 0V7.800a1 1 0 0 1 1.900 0v6.400c0 3.200-1.700 5.600-5.100 5.600-2.500 0-3.800-1.100-4.900-3.100L4.300 12.800c-.5-1.100 1-2 2.300-.4z" fill="#3b99d8"/><path d="M8.600 5.500v5.500M10.600 4.500v6.500M12.600 4.700v6.300M14.600 6v5" stroke="#e6f7fe" stroke-width=".45"/></svg></div><div class="tbtn" style="left:78.7px"><svg width="22.2" height="22.7" viewBox="0 0 22.2 22.7"><circle cx="9.2" cy="8.8" r="4.1" fill="#e6f7fe" stroke="#3b99d8" stroke-width="1.7"/><path d="M12.4 12.1l4.300 4.500" stroke="#3b99d8" stroke-width="2.500" stroke-linecap="round"/><rect x="7.700" y="7.300" width="3" height="3" fill="none" stroke="#3b99d8" stroke-width=".9"/></svg></div><div class="tbtn" style="left:104.0px"><svg width="22.2" height="22.7" viewBox="0 0 22.2 22.7"><path d="M3.900 11.300l6.800-6v3.800h7.400v4.400h-7.400v3.800z" fill="#3b99d8"/></svg></div><div class="tbtn" style="left:129.3px"><svg width="22.2" height="22.7" viewBox="0 0 22.2 22.7"><path d="M18.300 11.300l-6.800-6v3.800H4.100v4.400h7.400v3.800z" fill="#3b99d8"/></svg></div><div class="tbtn" style="left:154.6px"><svg width="22.2" height="22.7" viewBox="0 0 22.2 22.7"><g fill="none" stroke="#3b99d8" stroke-width="1.900" stroke-linecap="round"><rect x="3.200" y="11" width="9.400" height="5.400" rx="2.700" transform="rotate(-45 7.900 13.700)"/><rect x="9.600" y="6" width="9.400" height="5.400" rx="2.700" transform="rotate(-45 14.300 8.700)"/></g></svg></div><div class="tbtn act" style="left:179.9px"><svg width="22.2" height="22.7" viewBox="0 0 22.2 22.7"><text x="10.600" y="18.400" text-anchor="middle" font-family="Liberation Serif,serif" font-style="italic" font-weight="bold" font-size="21" fill="#fff">i</text></svg></div><div class="tbtn" style="left:205.2px"><svg width="22.2" height="22.7" viewBox="0 0 22.2 22.7"><text x="12.400" y="18.600" text-anchor="middle" font-family="Liberation Serif,serif" font-style="italic" font-weight="bold" font-size="19.500" fill="#3b99d8">i</text><rect x="4.400" y="4" width="6.200" height="6.200" fill="#fff" stroke="#3b99d8" stroke-width="1"/><path d="M10.600 4h3.600" stroke="#3b99d8" stroke-width="1.200"/></svg></div><div class="tbtn" style="left:230.5px"><svg width="22.2" height="22.7" viewBox="0 0 22.2 22.7"><path d="M3.300 14.600v2.800h15.600v-2.800" fill="none" stroke="#3b99d8" stroke-width="1.300"/><path d="M7.200 15.600v1.800M11.100 15.600v1.800M15 15.600v1.800" stroke="#3b99d8" stroke-width="1.100"/></svg></div><div class="tbtn" style="left:255.8px"><svg width="22.2" height="22.7" viewBox="0 0 22.2 22.7"><rect x="6.800" y="4.400" width="8.600" height="3.800" fill="#3b99d8"/><rect x="3.400" y="8.600" width="15.400" height="6.400" rx="1.200" fill="#3b99d8"/><rect x="6.800" y="12.800" width="8.600" height="5.600" fill="#e6f7fe" stroke="#3b99d8" stroke-width="1.200"/><path d="M8.400 14.800h5.400M8.400 16.600h5.400" stroke="#3b99d8" stroke-width=".8"/></svg></div><div class="tbtn" style="left:281.1px"><svg width="22.2" height="22.7" viewBox="0 0 22.2 22.7"><circle cx="11.100" cy="11.300" r="7.100" fill="#e6f7fe" stroke="#3b99d8" stroke-width="1.500"/><path d="M6.800 6.200c1.800-.4 3.200.4 3.600 1.600.4 1.300-.9 2-1.800 2.700-.9.700-.3 2.200-1.200 2.600-.9.400-2.400-1-2.900-2.600-.4-1.600.5-3.400 2.300-4.300zM13 10c1.300-.4 3.200.2 4 1.500.7 1.300-.2 3.700-1.600 4.600-1.400.9-1.700-.8-2.300-1.900-.6-1.100-1.600-1.500-1.400-2.600.1-.8.5-1.300 1.300-1.600zM12.100 4.600c1.400.1 2.800.8 3.600 1.800-.9.500-2.100.4-2.900-.1-.6-.4-.9-1-.7-1.700zM8.500 15.500c.8-.3 1.800 0 2.200.8.300.7 0 1.600-.5 2-.9-.2-1.800-.7-2.400-1.400-.1-.6.200-1.100.7-1.400z" fill="#3b99d8"/></svg></div><div class="tbtn" style="left:306.4px"><svg width="22.2" height="22.7" viewBox="0 0 22.2 22.7"><rect x="3.600" y="7" width="10.800" height="8.800" rx="1.600" fill="#3b99d8"/><path d="M15.200 11.400l4-3.200v6.400z" fill="#3b99d8"/></svg></div></div>
<div id="rtb"><div class="rbtn" style="left:2.3px"><svg width="23" height="22.5" viewBox="0 0 23 22.5"><rect x="3.800" y="4.800" width="15.400" height="13.200" fill="#b9f1ff" stroke="#3ba4e0" stroke-width="1"/><rect x="3.800" y="4.800" width="15.400" height="3" fill="#3ba4e0"/></svg></div><div class="rbtn" style="left:27.8px"><svg width="23" height="22.5" viewBox="0 0 23 22.5"><rect x="3.800" y="4.800" width="15.400" height="13.200" fill="#b9f1ff" stroke="#3ba4e0" stroke-width="1"/><rect x="3.800" y="4.800" width="4.600" height="13.200" fill="#3ba4e0"/></svg></div><div class="rbtn" style="left:53.2px"><svg width="23" height="22.5" viewBox="0 0 23 22.5"><rect x="3.800" y="4.800" width="15.400" height="13.200" fill="#b9f1ff" stroke="#3ba4e0" stroke-width="1"/><rect x="3.800" y="4.800" width="4" height="13.200" fill="#3ba4e0"/><path d="M9 10.200h4.400V7.800l4.400 3.600-4.400 3.600v-2.400H9z" fill="#1f6fb0"/></svg></div><div class="rbtn" style="left:78.5px"><svg width="23" height="22.5" viewBox="0 0 23 22.5"><rect x="3.800" y="4.800" width="15.400" height="13.200" fill="#b9f1ff" stroke="#3ba4e0" stroke-width="1"/><rect x="13.800" y="6.600" width="3.600" height="9.600" fill="#3ba4e0"/></svg></div></div>
<div id="dlg">
  <div id="dlgt"><span id="dlgtt">Informacja o obiektach</span><svg class="abs" style="left:546px;top:6px" width="8" height="8" viewBox="0 0 8 8"><path d="M1.400 1.400l5.200 5.200M6.600 1.400l-5.200 5.200" stroke="#6f9fc8" stroke-width="2.100" stroke-linecap="butt"/></svg></div>
  <div id="ibox">
    <div class="kv" style="top:2.700px"><span class="k">Województwo :</span><span class="v">ŚWIĘTOKRZYSKIE</span></div>
    <div class="kv" style="top:16.200px"><span class="k">Powiat :</span><span class="v">JĘDRZEJOWSKI</span></div>
    <div class="kv" style="top:29.700px"><span class="k">Jednostka ewidencyjna :</span><span class="v">JĘDRZEJÓW - obszar wiejski</span></div>
    <div class="kv" style="top:43.200px"><span class="k">Nazwa obrębu :</span><span class="v">LASKÓW</span></div>
    <div class="kv" style="top:56.700px"><span class="k">Numer obrębu :</span><span class="v">0014</span></div>
    <div id="ihead">INFORMACJA O DZIAŁCE</div>
    <div id="idate">z dnia: 15-03-2026</div>
    <div class="jr" style="top:115px">Jednostka rejestrowa : <span class="abs" style="left:96.500px;top:0">G.259</span></div>
    <div class="jr" style="top:128.600px">Grupa rejestrowa : <span class="abs" style="left:96.500px;top:0">7 (Grunty osób fizycznych)</span></div>
    <div id="tbl">
      <div class="th" style="left:0;width:85px">Nr działki</div>
      <div class="th" style="left:85px;width:80.300px">Położenie działki</div>
      <div class="th" style="left:165.300px;width:107.700px">Klasoużytki</div>
      <div class="th" style="left:273px;width:75px">Pow. działki[ha]</div>
      <div class="td" style="left:0;width:85px"><span class="abs" style="left:4px;top:1.500px;line-height:10.700px;white-space:nowrap">967<br>Id działki :<br><span style="font-size:8.400px">260202_5.0014.967</span></span></div>
      <div class="td" style="left:85px;width:80.300px"></div>
      <div class="td" style="left:165.300px;width:107.700px">
        <div class="it" style="top:0.500px"><span class="c1">Oznaczenie</span><span class="c2">Pow.</span></div>
        <div class="it ln" style="top:15.500px"><span class="c1">ŁIV</span><span class="c2">0,5700</span></div>
        <div class="it ln" style="top:29.500px"><span class="c1">ŁV</span><span class="c2">0,1900</span></div>
        <div class="it ln" style="top:43.500px"><span class="c1">W</span><span class="c2">0,0100</span></div>
        <div class="abs" style="left:61.500px;top:2px;width:1px;height:56px;background:#c8d6e6"></div>
      </div>
      <div class="td" style="left:273px;width:75px"><span class="abs" style="right:5.500px;top:1.500px">0,7700</span></div>
    </div>
    <div id="redt">Pokaż/ukryj wybrane dane EGiB aktualizowane do dnia 31 lipca 2021r.</div>
    <div id="zak">Zakoloruj:</div>
    <div class="sw" style="left:44px;background:#ffa3a3"></div>
    <div class="sw" style="left:84px;background:#a3ffa3"></div>
    <div class="sw" style="left:123.700px;background:#b3b3ff"></div>
    <div class="sw" style="left:163.800px;background:#ffff84"></div>
    <div id="usun">Usuń zaznaczenia</div>
  </div>
  <div class="wyd" style="top:340.500px">Wydruk ciągły</div>
  <div class="wyd" style="top:360.300px">Wydruk z podziałem na strony</div>
  <svg class="abs" style="left:555px;top:413px" width="9" height="9" viewBox="0 0 9 9"><path d="M8.500 1.500l-7 7M8.500 4.500l-4 4M8.500 7l-1.500 1.500" stroke="#9ab" stroke-width=".8"/></svg>
</div>
<div id="rp">
  <div class="rh" style="top:0"><span class="tri d" style="left:8px;top:8.500px"></span><span class="rht">Mapa referencyjna</span></div>
  <svg class="abs" style="left:0;top:20px" width="138.500" height="114" viewBox="1055.500 202 138.500 114"><g stroke="#333" stroke-width=".6" stroke-linejoin="round">
    <polygon points="1114.7,214.4 1117.9,210.4 1125.1,211.2 1131.5,208.0 1133.1,204.0 1139.5,204.8 1144.2,207.2 1145.8,213.6 1147.4,220.0 1152.2,226.4 1149.8,231.9 1145.8,235.9 1142.7,240.7 1137.1,242.3 1134.7,237.5 1129.9,232.7 1123.5,226.4 1117.9,220.8 1114.7,216.8" fill="#a6f58e"/>
    <polygon points="1114.7,217.6 1117.9,220.8 1123.5,226.4 1129.9,232.7 1134.7,237.9 1133.1,241.5 1129.1,243.9 1120.3,245.5 1110.7,244.7 1105.1,241.5 1103.5,235.9 1106.7,230.3 1109.9,224.8 1112.3,220.0" fill="#fbcaca"/>
    <polygon points="1152.2,226.4 1155.4,225.1 1160.2,228.7 1163.4,234.3 1171.4,236.7 1177.8,242.3 1185.8,247.1 1190.6,255.9 1187.4,259.9 1177.8,261.5 1173.0,260.7 1169.0,263.1 1164.2,259.1 1160.2,250.3 1153.8,243.9 1148.2,239.9 1145.8,235.9 1149.8,231.9" fill="#fbcaca"/>
    <polygon points="1129.1,243.9 1133.1,242.3 1137.1,242.6 1142.7,241.0 1148.2,239.9 1153.8,243.9 1160.2,250.3 1164.2,259.1 1169.0,263.1 1161.8,269.5 1153.8,271.9 1150.6,277.5 1149.8,287.1 1145.8,284.7 1139.5,279.1 1133.1,276.7 1127.5,278.3 1124.3,274.3 1128.3,264.7 1128.3,253.5" fill="#b4e4fc"/>
    <polygon points="1110.7,244.7 1120.3,245.5 1129.1,243.9 1128.3,253.5 1128.3,264.7 1124.3,274.3 1120.3,271.9 1115.5,273.5 1109.9,269.5 1105.1,266.3 1102.7,262.3 1098.7,259.9 1099.5,255.1 1105.1,251.1" fill="#f778f7"/>
    <polygon points="1169.0,263.1 1173.0,260.7 1176.2,264.7 1177.0,272.7 1174.6,279.1 1170.6,285.5 1168.2,292.6 1161.8,290.2 1153.8,287.1 1149.8,287.1 1150.6,277.5 1153.8,271.9 1161.8,269.5" fill="#f778f7"/>
    <polygon points="1105.1,266.3 1102.7,263.9 1096.3,266.3 1088.3,264.7 1080.4,267.9 1070.8,269.5 1066.0,275.9 1058.0,281.5 1058.8,284.7 1067.6,283.9 1074.0,287.9 1078.8,288.7 1081.9,283.1 1086.7,278.3 1094.7,276.7 1101.1,274.3 1105.1,271.1 1109.9,269.8" fill="#fbcaca"/>
    <polygon points="1109.9,269.8 1115.5,273.5 1120.3,271.9 1124.3,274.3 1127.5,278.3 1122.7,283.1 1120.3,288.7 1115.5,290.2 1111.5,286.3 1107.5,287.1 1105.9,295.0 1099.5,299.0 1091.5,295.8 1081.9,298.2 1078.0,293.4 1078.8,288.7 1081.9,283.1 1086.7,278.3 1094.7,276.7 1101.1,274.3 1105.1,271.1" fill="#a6f58e"/>
    <polygon points="1127.5,278.3 1133.1,276.7 1139.5,279.1 1145.8,284.7 1149.8,287.1 1149.0,295.0 1152.2,302.2 1154.6,306.2 1150.6,307.8 1146.6,313.4 1141.1,307.8 1133.1,305.4 1126.7,301.4 1118.7,302.2 1110.7,303.0 1106.7,298.2 1105.9,295.0 1107.5,287.1 1111.5,286.3 1115.5,290.2 1120.3,288.7 1122.7,283.1" fill="#fbcaca"/>
    <polygon points="1136.3,215.2 1138.7,212.8 1141.9,213.6 1142.3,218.4 1140.3,221.6 1136.3,222.4 1134.3,219.2" fill="#f6f07c"/>
    <polygon points="1136.3,263.9 1139.5,259.9 1144.2,259.6 1147.4,263.1 1148.2,267.1 1142.7,266.6 1137.9,265.5" fill="#f6f07c"/>
    <polygon points="1097.9,283.1 1101.9,279.1 1108.3,278.7 1105.9,283.1 1102.7,285.5 1098.7,285.1" fill="#f6f07c"/></g>
    <path d="M1145.2 242.2v4.5M1145.2 250.7v4.5M1138.7 248.7h4.5M1147.2 248.7h4.5" stroke="#e01818" stroke-width="1.3"/>
  </svg>
  <div class="rr" style="top:134.500px;height:20.500px"><span class="tri r"></span><span class="rrt">Pomiary</span></div>
  <div class="rr" style="top:155px;height:20.500px"><span class="tri r"></span><span class="rrt">Powiększenia</span></div>
  <div class="rh" style="top:175.500px"><span class="tri d" style="left:8px;top:8.500px"></span><span class="rht">Szukaj</span></div>
  <div id="sel">Wszystkie gminy<span id="selb"><svg width="6" height="8" viewBox="0 0 6 8"><path d="M1.200 3L3 1.200 4.800 3M1.200 5L3 6.800 4.800 5" fill="none" stroke="#fff" stroke-width="1"/></svg></span></div>
  <div class="sb" style="left:43px;top:223.500px;width:52.500px;height:18px">Działka</div>
  <div class="sb" style="left:47.500px;top:247px;width:43.500px;height:17.500px">Tekst</div>
  <div class="sb" style="left:46px;top:270.500px;width:46px;height:17.500px">Adres</div>
  <div class="rr" style="top:295.500px;height:20.500px"><span class="tri r"></span><span class="rrt">Lokalizacja współrzędnej</span></div>
  <div class="rr" style="top:316px;height:32px"><span class="tri r"></span><span class="rrt" style="top:3px;line-height:11.800px">GML / WFS / DXF / GPX /<br>Pikiety</span></div>
</div>
<div id="cbox">
  <div class="cbtn" style="top:4px;font-size:8.500px;font-weight:bold;color:#222;line-height:12px;letter-spacing:1.500px;padding-left:1.500px">°'"</div>
  <div class="cbtn" style="top:18.400px;background:#fff;font-size:8.200px;border-color:#8fb6d2">2000</div>
  <span class="cl" style="left:30.500px;top:5px">N:</span><span class="cv" style="left:42.300px;top:5px">50° 42' 5.42"</span>
  <span class="cl" style="left:108px;top:5px">E:</span><span class="cv" style="left:119px;top:5px">20° 18' 39.75"</span>
  <span class="cl" style="left:30.500px;top:18.700px">X:</span><span class="cv" style="left:42.300px;top:18.700px">5618673.48</span>
  <span class="cl" style="left:108px;top:18.700px">Y:</span><span class="cv" style="left:119px;top:18.700px">7451331.05</span>
</div>
<div id="attr">© <span style="color:#c030c0">OpenStreetMap</span> contributors</div>
<svg id="logo" class="abs" style="left:764px;top:510px" width="260" height="100" viewBox="940 656 260 100">
  <defs><filter id="glow" x="-10%" y="-30%" width="120%" height="160%"><feGaussianBlur stdDeviation="2.600"/></filter></defs>
  <g filter="url(#glow)" opacity=".7" fill="#e8ece8" stroke="#e8ece8" stroke-linejoin="round">
    <text x="949" y="733.300" font-family="Liberation Sans,sans-serif" font-weight="bold" font-style="italic" font-size="40.500" stroke-width="7" textLength="175" lengthAdjust="spacingAndGlyphs">IGRIT.PL</text>
    <rect x="949" y="738" width="198" height="11" stroke-width="4"/>
    <path d="M1121 683c8 2 12 8 14 12 8-12 22-22 36-26-12 10-22 24-26 36l10 27-15-24c-8 0-14-4-15-12-1-6-2-10-4-13z" stroke-width="5"/>
  </g>
  <text x="949" y="733.300" font-family="Liberation Sans,sans-serif" font-weight="bold" font-style="italic" font-size="40.500" fill="#3e4140" stroke="#3e4140" stroke-width="1.300" textLength="175" lengthAdjust="spacingAndGlyphs">IGRIT.PL</text>
  <rect x="1060" y="722.500" width="12" height="11.500" rx="2.500" fill="#c8141e"/>
  <path d="M1121 683c8 2 12 8 14 12 8-12 22-22 36-26-12 10-22 24-26 36l10 27-15-24c-8 0-14-4-15-12-1-6-2-10-4-13z" fill="#4f8f2c"/>
  <text x="951" y="747.500" font-family="Liberation Sans,sans-serif" font-weight="bold" font-size="7.600" fill="#6d7572" textLength="192" lengthAdjust="spacing">Internetowa Giełda Rolna i Towarowa</text>
</svg>
<div id="scl"><svg class="abs" style="left:3px;top:4px" width="48" height="6" viewBox="0 0 48 6"><path d="M.6 0v4.600h46V0" fill="none" stroke="#111" stroke-width="1.200"/></svg><span class="abs" style="left:57.500px;top:2.500px">100 m</span></div>
  </div>
</div>
</body>
</html>
